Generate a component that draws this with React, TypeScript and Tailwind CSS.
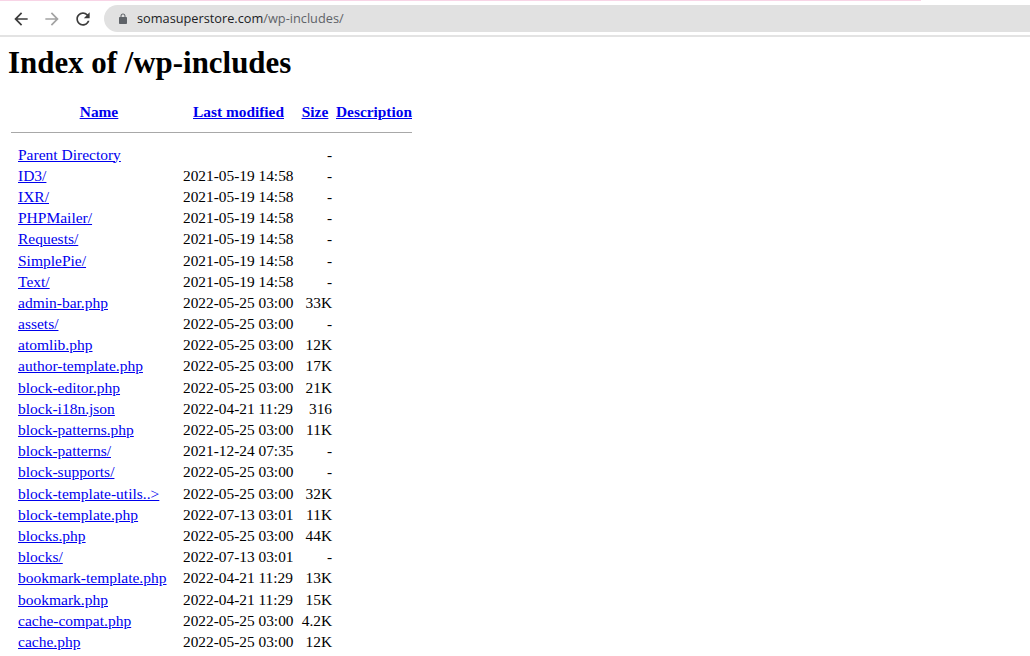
const rows: [string, string, string][] = [
  ["Parent Directory", "", "-"],
  ["ID3/", "2021-05-19 14:58", "-"],
  ["IXR/", "2021-05-19 14:58", "-"],
  ["PHPMailer/", "2021-05-19 14:58", "-"],
  ["Requests/", "2021-05-19 14:58", "-"],
  ["SimplePie/", "2021-05-19 14:58", "-"],
  ["Text/", "2021-05-19 14:58", "-"],
  ["admin-bar.php", "2022-05-25 03:00", "33K"],
  ["assets/", "2022-05-25 03:00", "-"],
  ["atomlib.php", "2022-05-25 03:00", "12K"],
  ["author-template.php", "2022-05-25 03:00", "17K"],
  ["block-editor.php", "2022-05-25 03:00", "21K"],
  ["block-i18n.json", "2022-04-21 11:29", "316"],
  ["block-patterns.php", "2022-05-25 03:00", "11K"],
  ["block-patterns/", "2021-12-24 07:35", "-"],
  ["block-supports/", "2022-05-25 03:00", "-"],
  ["block-template-utils..>", "2022-05-25 03:00", "32K"],
  ["block-template.php", "2022-07-13 03:01", "11K"],
  ["blocks.php", "2022-05-25 03:00", "44K"],
  ["blocks/", "2022-07-13 03:01", "-"],
  ["bookmark-template.php", "2022-04-21 11:29", "13K"],
  ["bookmark.php", "2022-04-21 11:29", "15K"],
  ["cache-compat.php", "2022-05-25 03:00", "4.2K"],
  ["cache.php", "2022-05-25 03:00", "12K"],
];

function Icon({ d, className }: { d: string; className: string }) {
  return (
    <svg viewBox="0 0 24 24" className={className} fill="currentColor">
      <path d={d} />
    </svg>
  );
}

const back = "M20 11H7.83l5.59-5.59L12 4l-8 8 8 8 1.41-1.41L7.83 13H20v-2z";
const forward = "M12 4l-1.41 1.41L16.17 11H4v2h12.17l-5.58 5.59L12 20l8-8z";
const reload = "M17.65 6.35C16.2 4.9 14.21 4 12 4c-4.42 0-7.99 3.58-7.99 8s3.57 8 7.99 8c3.73 0 6.84-2.55 7.73-6h-2.08c-.82 2.33-3.04 4-5.65 4-3.31 0-6-2.69-6-6s2.69-6 6-6c1.66 0 3.14.69 4.22 1.78L13 11h7V4l-2.35 2.35z";
const lock = "M18 8h-1V6c0-2.76-2.24-5-5-5S7 3.24 7 6v2H6c-1.1 0-2 .9-2 2v10c0 1.1.9 2 2 2h12c1.1 0 2-.9 2-2V10c0-1.1-.9-2-2-2zM9 6c0-1.66 1.34-3 3-3s3 1.34 3 3v2H9V6z";

export default function App() {
  return (
    <div className="w-[1030px] h-[656px] overflow-hidden bg-white font-['Liberation_Serif',serif] text-black">
      <div className="h-px w-[921px] bg-[#f8d4e6]" />
      <div className="h-[4px]" />
      <div className="flex h-[27px] items-center">
        <Icon d={back} className="ml-[11px] h-5 w-5 text-[#3c3c3c]" />
        <Icon d={forward} className="ml-[11px] h-5 w-5 text-[#a3a3a3]" />
        <Icon d={reload} className="ml-[11px] h-5 w-5 text-[#3c3c3c]" />
        <div className="ml-[11px] flex h-[27px] flex-1 items-center rounded-l-full bg-[#e1e1e1] pl-[13px]">
          <Icon d={lock} className="h-[12px] w-[12px] text-[#5f6368]" />
          <span className="ml-[8px] font-['Open_Sans',sans-serif] text-[12.75px] text-[#5f6368]">
            <span className="text-[#202124]">somasuperstore.com</span>/wp-includes/
          </span>
        </div>
      </div>
      <div className="mt-[3px] h-[2px] bg-[#e3e3e3]" />
      <h1 className="ml-2 mt-[8px] text-[30.9px] font-bold leading-[36px]">Index of /wp-includes</h1>
      <div className="ml-[11px] mt-[19px] w-[401px]">
        <div className="grid h-[22px] grid-cols-[172px_113px_38px_1fr] items-center text-center text-[15.36px] font-bold text-[#0000ee] underline">
          <a className="pl-[4px]">Name</a>
          <a className="pr-[2px]">Last modified</a>
          <a>Size</a>
          <a className="ml-[2px]">Description</a>
        </div>
        <div className="mt-[10px] h-px bg-[#a8a8a8]" />
        <div className="mt-[10.5px] text-[15.36px]">
          {rows.map(([name, date, size]) => (
            <div key={name} className="grid h-[21.2px] grid-cols-[172px_113px_38px] items-center leading-[21px]">
              <a className="pl-[7px] text-[15.5px] text-[#0000ee] underline">{name}</a>
              <span>{date}</span>
              <span className="pr-[2px] text-right">{size}</span>
            </div>
          ))}
        </div>
      </div>
    </div>
  );
}
